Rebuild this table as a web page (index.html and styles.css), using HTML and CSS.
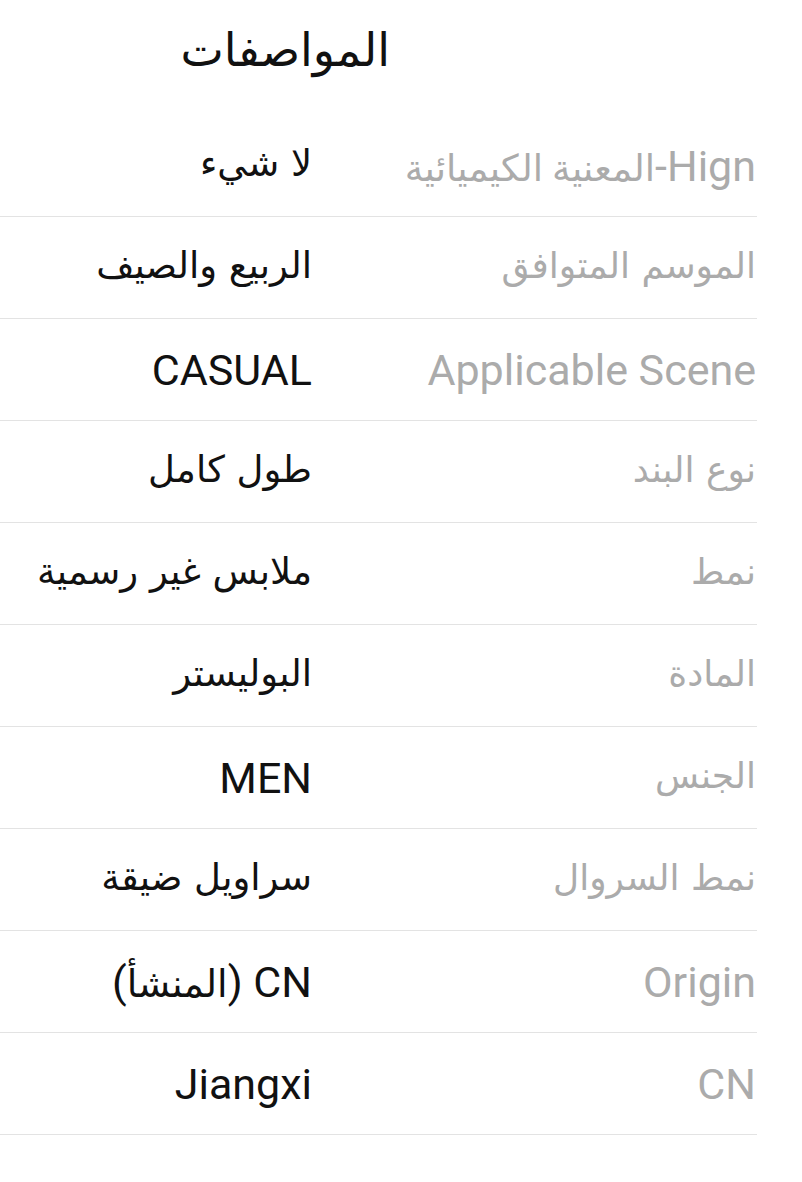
FILE: index.html
```html
<!DOCTYPE html>
<html lang="ar" dir="rtl">
<head>
<meta charset="utf-8">
<title>المواصفات</title>
<link rel="stylesheet" href="styles.css">
</head>
<body>
<div class="page">
  <h1 class="title">المواصفات</h1>
  <div class="specs">
    <div class="row"><div class="label">Hign-<span class="ar">المعنية الكيميائية</span></div><div class="value ar-cell">لا شيء</div></div>
    <div class="row"><div class="label ar-cell">الموسم المتوافق</div><div class="value ar-cell">الربيع والصيف</div></div>
    <div class="row"><div class="label">Applicable Scene</div><div class="value">CASUAL</div></div>
    <div class="row"><div class="label ar-cell">نوع البند</div><div class="value ar-cell">طول كامل</div></div>
    <div class="row"><div class="label ar-cell">نمط</div><div class="value ar-cell">ملابس غير رسمية</div></div>
    <div class="row"><div class="label ar-cell">المادة</div><div class="value ar-cell">البوليستر</div></div>
    <div class="row"><div class="label ar-cell">الجنس</div><div class="value">MEN</div></div>
    <div class="row"><div class="label ar-cell">نمط السروال</div><div class="value ar-cell">سراويل ضيقة</div></div>
    <div class="row"><div class="label">Origin</div><div class="value">CN (<span class="ar">المنشأ</span>)</div></div>
    <div class="row"><div class="label">CN</div><div class="value">Jiangxi</div></div>
  </div>
</div>
</body>
</html>
```
FILE: styles.css
```css
html, body {
  margin: 0;
  padding: 0;
  background: #ffffff;
}
body {
  font-family: Roboto, "DejaVu Sans", sans-serif;
  color: #111111;
}
.page {
  width: 802px;
}
.title {
  margin: 0;
  height: 115px;
  box-sizing: border-box;
  padding: 18px 412px 0 0;
  font-family: "DejaVu Sans", sans-serif;
  font-size: 46px;
  font-weight: normal;
  line-height: 64px;
  color: #111111;
}
.specs {
  width: 757px;
  margin-right: 45px;
}
.row {
  display: grid;
  grid-template-columns: 445px 1fr;
  height: 102px;
  box-sizing: border-box;
  border-bottom: 1px solid #e3e3e3;
  align-items: center;
  font-size: 43px;
}
.label {
  color: #ababab;
  padding-right: 1px;
  white-space: nowrap;
}
.value {
  color: #111111;
  white-space: nowrap;
}
.ar {
  font-size: 37px;
}
.value .ar {
  font-size: 38px;
}
.ar-cell {
  font-family: "DejaVu Sans", sans-serif;
  font-size: 36px;
  padding-bottom: 4px;
}
.value.ar-cell {
  font-size: 37px;
}
```
